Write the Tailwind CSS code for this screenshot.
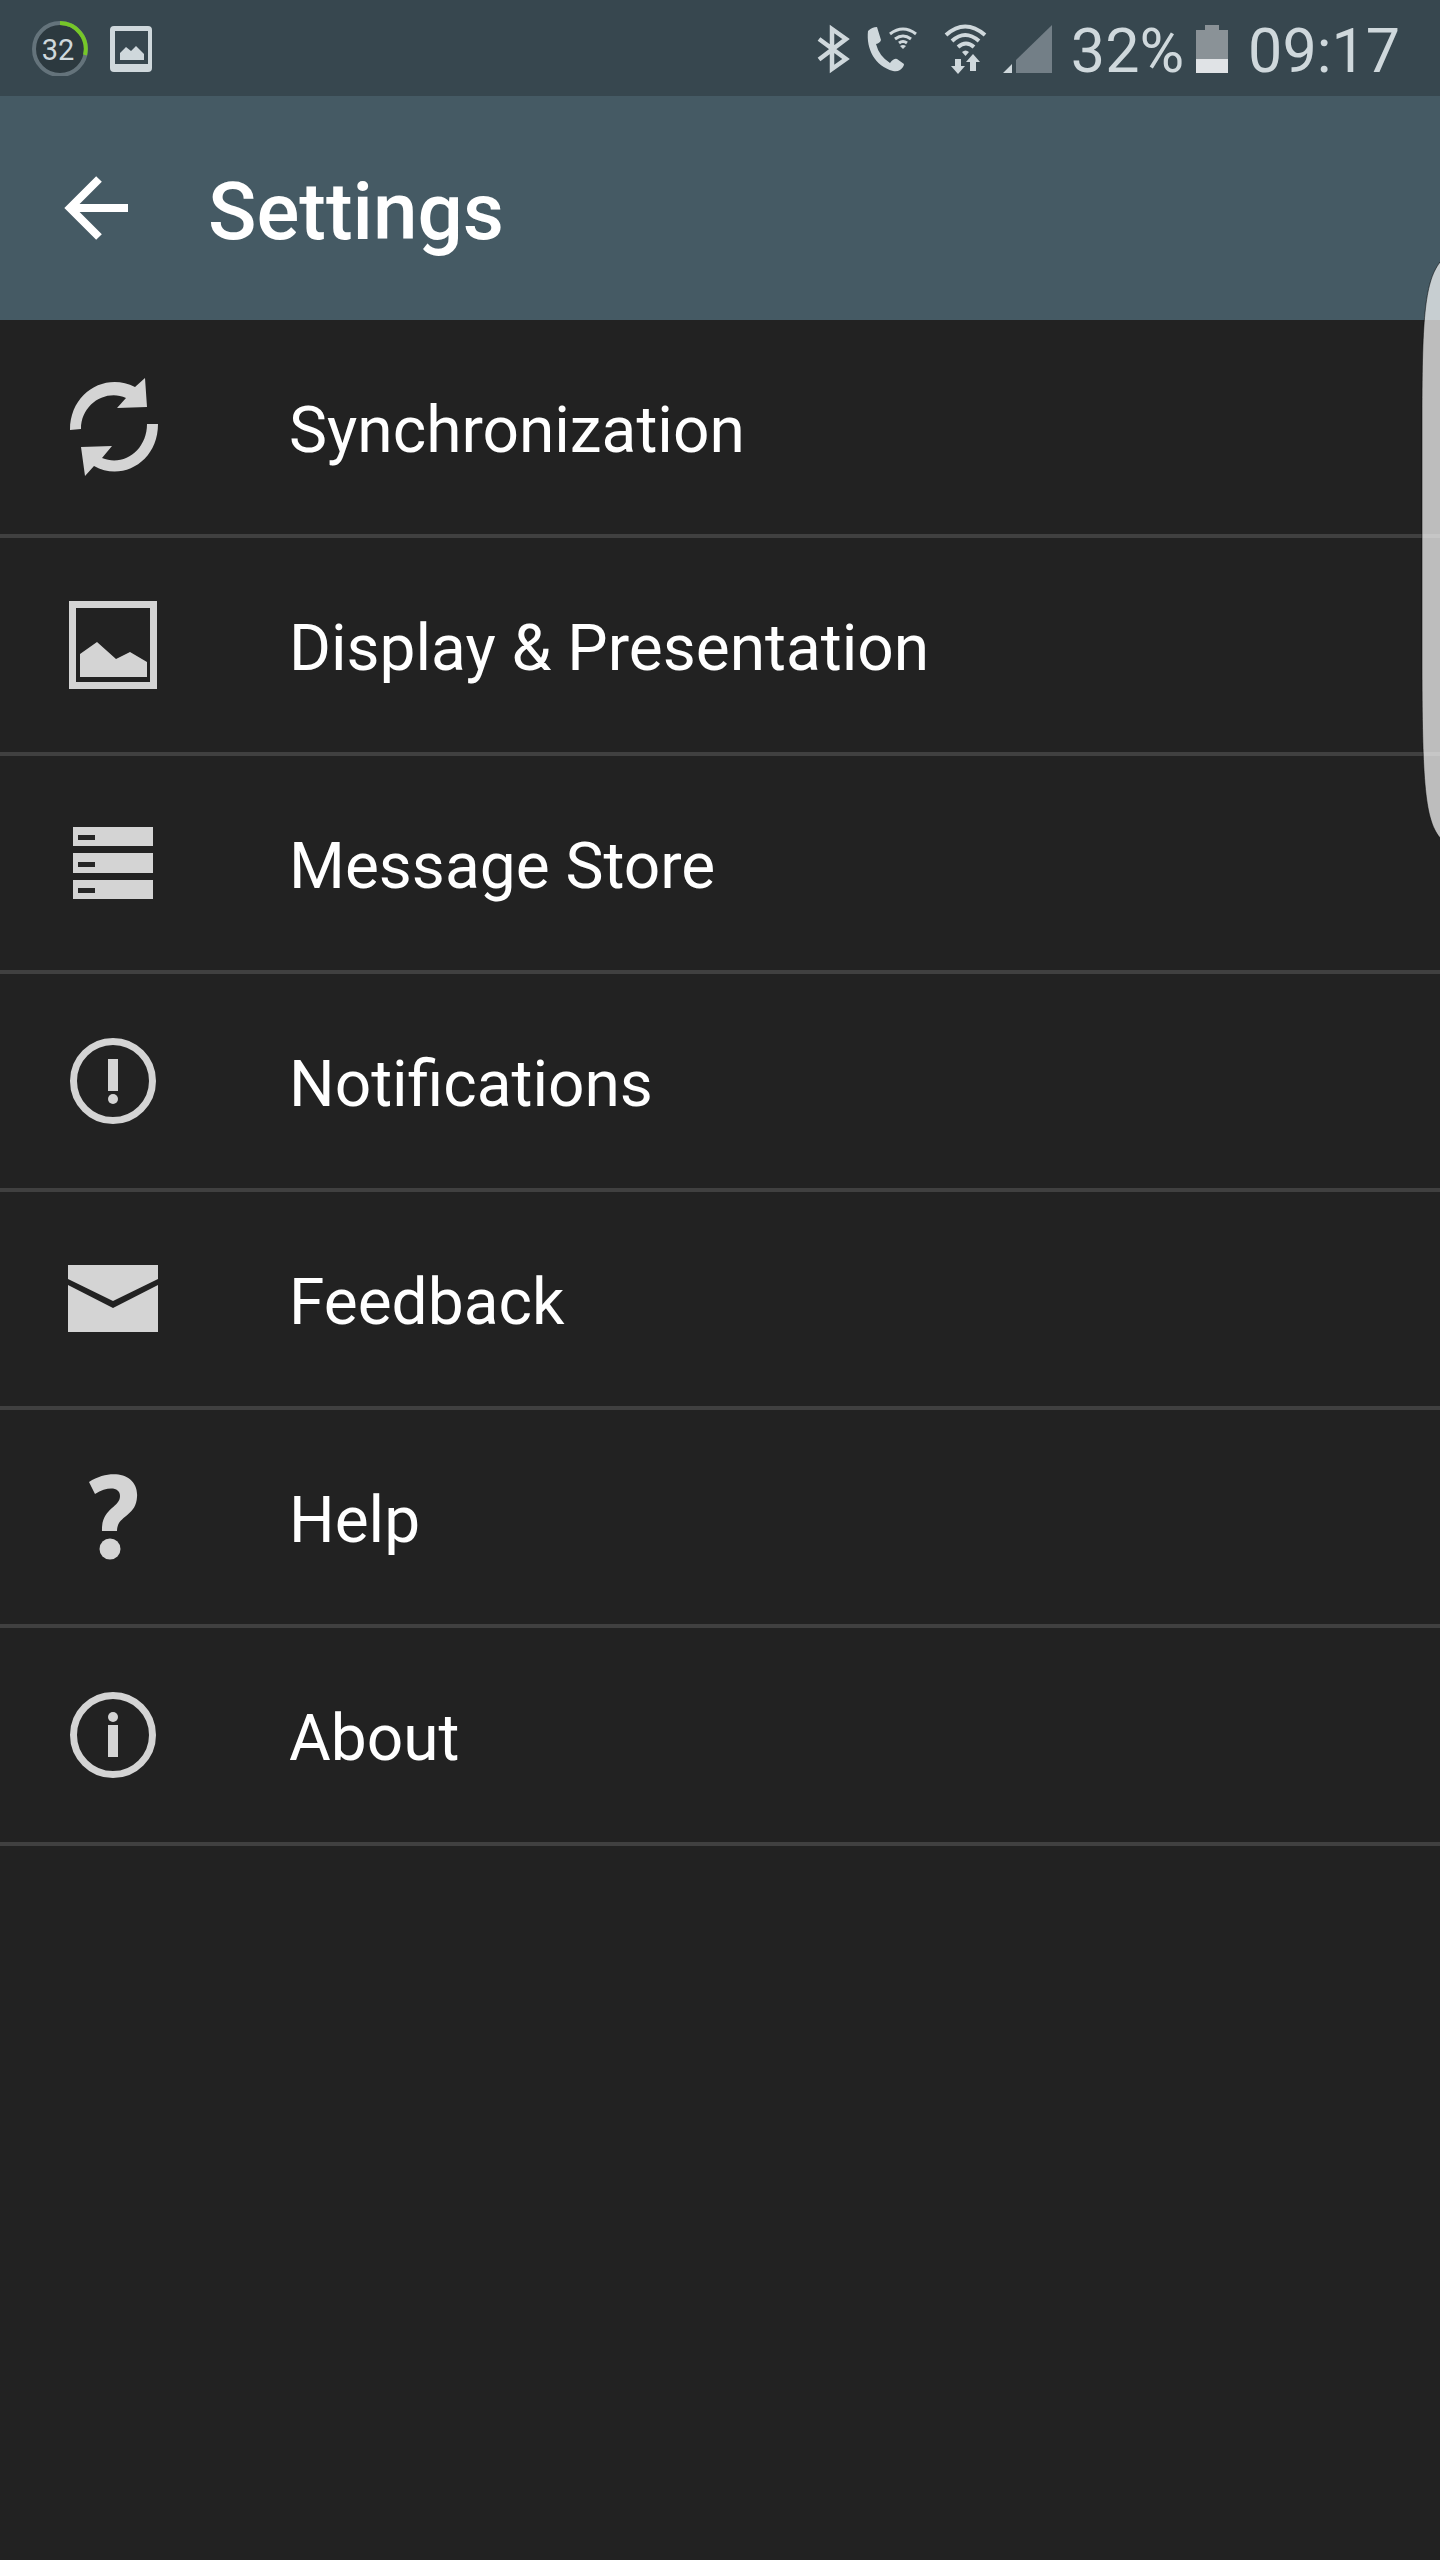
<!DOCTYPE html>
<html lang="en">
<head>
<meta charset="utf-8">
<meta name="viewport" content="width=device-width, initial-scale=1">
<title>Settings</title>
<script src="https://cdn.jsdelivr.net/npm/@tailwindcss/browser@4"></script>
</head>
<body class="relative min-h-screen overflow-x-hidden bg-[#222222] font-['Roboto',sans-serif] text-white">

<!-- System status bar -->
<div class="flex h-24 items-center justify-between bg-[#37474f] pr-10 pl-8 text-[#cfd8dc]">
  <div class="flex items-center gap-5">
    <div class="relative flex size-14 items-center justify-center">
      <svg class="absolute inset-0" viewBox="0 0 56 56" fill="none" aria-hidden="true">
        <circle cx="28" cy="29" r="26" fill="#2c393f" stroke="#64737b" stroke-width="4"/>
        <path d="M28 3a26 26 0 0 1 25 32" stroke="#76c728" stroke-width="4"/>
      </svg>
      <span class="relative pt-1 pr-1 text-[29px] leading-none">32</span>
    </div>
    <svg class="h-14 w-12" viewBox="0 0 48 56" aria-hidden="true">
      <path fill="#cfd8dc" fill-rule="evenodd" d="M6 6h34a4 4 0 0 1 4 4v38a4 4 0 0 1-4 4H6a4 4 0 0 1-4-4V10a4 4 0 0 1 4-4zm1 5v33h33V11z"/>
      <path fill="#cfd8dc" d="M12 40V33l6-6 5 4 5-5 8 8v6z"/>
    </svg>
  </div>
  <div class="flex items-center">
    <svg class="h-24 w-64" viewBox="812 0 256 96" fill="#cfd8dc" aria-hidden="true">
      <path fill="none" stroke="#cfd8dc" stroke-width="4.500" stroke-miterlimit="10" d="M820 39l27 20-14 10V29l14 10-27 20.500"/>
      <path d="M869 31q4-4 9-4l4 13q-1 3-5 4 3 12 14 19 4-5 7-4l7 5q0 3-4 6-3 2-7 1c-18-5-27-22-25-40z"/>
      <g fill="none" stroke="#cfd8dc" stroke-width="3">
        <path d="M891 34q13-10 26 0M896 39q8-6 16 0M900 43q4-3 8 0"/>
      </g>
      <path d="M901 46q3-2 6 0l-3 3z"/>
      <g fill="none" stroke="#cfd8dc" stroke-width="4">
        <path d="M947 35q19-17 39 0M953 41q13-12 27 0M959 47q8-7 16 0"/>
      </g>
      <path d="M963 52q3.500-3 7 0l-3.500 4zM956 59h6v7h4l-7 8-7-8h4zM971 71v-9h-4l7-8 7 8h-4v9zM1004 73h9v-9z"/>
      <path fill="#737f87" d="M1017 73V60l36-35v48z"/>
    </svg>
    <span class="ml-1 pt-[6px] text-[61px] leading-none">32%</span>
    <svg class="ml-3 h-24 w-8" viewBox="0 0 32 96" aria-hidden="true">
      <path fill="#8a9297" d="M0 30h9v-5h14v5h9v29H0z"/>
      <path fill="#e0e3e6" d="M0 59h32v14H0z"/>
    </svg>
    <time class="ml-5 pt-[6px] text-[61px] leading-none" datetime="09:17">09:17</time>
  </div>
</div>

<!-- App bar -->
<header class="flex h-56 items-center gap-4 bg-[#455a64] pl-12">
  <button type="button" aria-label="Back" class="size-36">
    <svg class="size-24" viewBox="0 0 96 96" fill="none" stroke="#fff" stroke-width="8" aria-hidden="true">
      <path d="M80 48H22M51 19L22 48l29 29"/>
    </svg>
  </button>
  <h1 class="pt-2 text-[80px] leading-[96px] font-medium">Settings</h1>
</header>

<nav aria-label="Settings">
  <a href="#synchronization" class="flex h-[218px] items-center gap-[104px] border-b-4 border-[#404040] pl-[41px] text-[64px] leading-[80px]">
    <svg class="size-36 shrink-0" viewBox="41 355 144 144" fill="#d4d4d4" aria-hidden="true">
      <path d="M70 430c0-38 36-58 65-43l10-9 2 29-30 1 9-10c-20-9-45 6-45 31z"/>
      <path d="M158 424c0 38-36 58-64 42l-9 10-4-29 31-1-10 12c22 9 45-8 45-34z"/>
    </svg>
    <span class="pt-2">Synchronization</span>
  </a>
  <a href="#display" class="flex h-[218px] items-center gap-[104px] border-b-4 border-[#404040] pl-[41px] text-[64px] leading-[80px]">
    <svg class="size-36 shrink-0" viewBox="41 573 144 144" fill="#d4d4d4" aria-hidden="true">
      <path fill-rule="evenodd" d="M69 601h88v88H69zm7 7v74h74v-74z"/>
      <path d="M80 677v-23l17-12 19 17 14-7 17 10v15z"/>
    </svg>
    <span class="pt-2">Display &amp; Presentation</span>
  </a>
  <a href="#message-store" class="flex h-[218px] items-center gap-[104px] border-b-4 border-[#404040] pl-[41px] text-[64px] leading-[80px]">
    <svg class="size-36 shrink-0" viewBox="41 791 144 144" aria-hidden="true">
      <path fill="#d4d4d4" d="M73 827h80v19H73zM73 853h80v20H73zM73 880h80v19H73z"/>
      <path fill="#262626" d="M78 835h17v5H78zM78 862h17v5H78zM78 888h17v5H78z"/>
    </svg>
    <span class="pt-2">Message Store</span>
  </a>
  <a href="#notifications" class="flex h-[218px] items-center gap-[104px] border-b-4 border-[#404040] pl-[41px] text-[64px] leading-[80px]">
    <svg class="size-36 shrink-0" viewBox="41 1009 144 144" fill="#d4d4d4" aria-hidden="true">
      <circle cx="113" cy="1081" r="39.500" fill="none" stroke="#d4d4d4" stroke-width="7"/>
      <path d="M108 1059h10v32h-10z"/>
      <circle cx="113" cy="1099" r="5"/>
    </svg>
    <span class="pt-2">Notifications</span>
  </a>
  <a href="#feedback" class="flex h-[218px] items-center gap-[104px] border-b-4 border-[#404040] pl-[41px] text-[64px] leading-[80px]">
    <svg class="size-36 shrink-0" viewBox="41 1227 144 144" aria-hidden="true">
      <path fill="#d4d4d4" d="M68 1265h90v14l-45 22-45-22zM68 1285l45 23 45-23v47H68z"/>
    </svg>
    <span class="pt-2">Feedback</span>
  </a>
  <a href="#help" class="flex h-[218px] items-center gap-[104px] border-b-4 border-[#404040] pl-[41px] text-[64px] leading-[80px]">
    <svg class="size-36 shrink-0" viewBox="41 1445 144 144" fill="#d4d4d4" aria-hidden="true">
      <path d="M89 1482c24-15 50-7 48 15-1 20-20 18-20 34h-15c-1-23 18-23 18-35 0-9-12-10-25-2z"/>
      <circle cx="110" cy="1549" r="10.500"/>
    </svg>
    <span class="pt-2">Help</span>
  </a>
  <a href="#about" class="flex h-[218px] items-center gap-[104px] border-b-4 border-[#404040] pl-[41px] text-[64px] leading-[80px]">
    <svg class="size-36 shrink-0" viewBox="41 1663 144 144" fill="#d4d4d4" aria-hidden="true">
      <circle cx="113" cy="1735" r="39.500" fill="none" stroke="#d4d4d4" stroke-width="7"/>
      <circle cx="113" cy="1717" r="5"/>
      <path d="M108 1725h10v32h-10z"/>
    </svg>
    <span class="pt-2">About</span>
  </a>
</nav>

<!-- Edge panel handle floating over the page -->
<svg class="absolute top-64 right-0 h-[592px] w-5" viewBox="0 0 20 592" aria-hidden="true">
  <path fill="#fff" fill-opacity=".7" stroke="#000" stroke-opacity=".5" stroke-width="1" d="M21 5C5 24 2 60 2 160V400C2 530 5 565 21 583z"/>
</svg>
</body>
</html>
